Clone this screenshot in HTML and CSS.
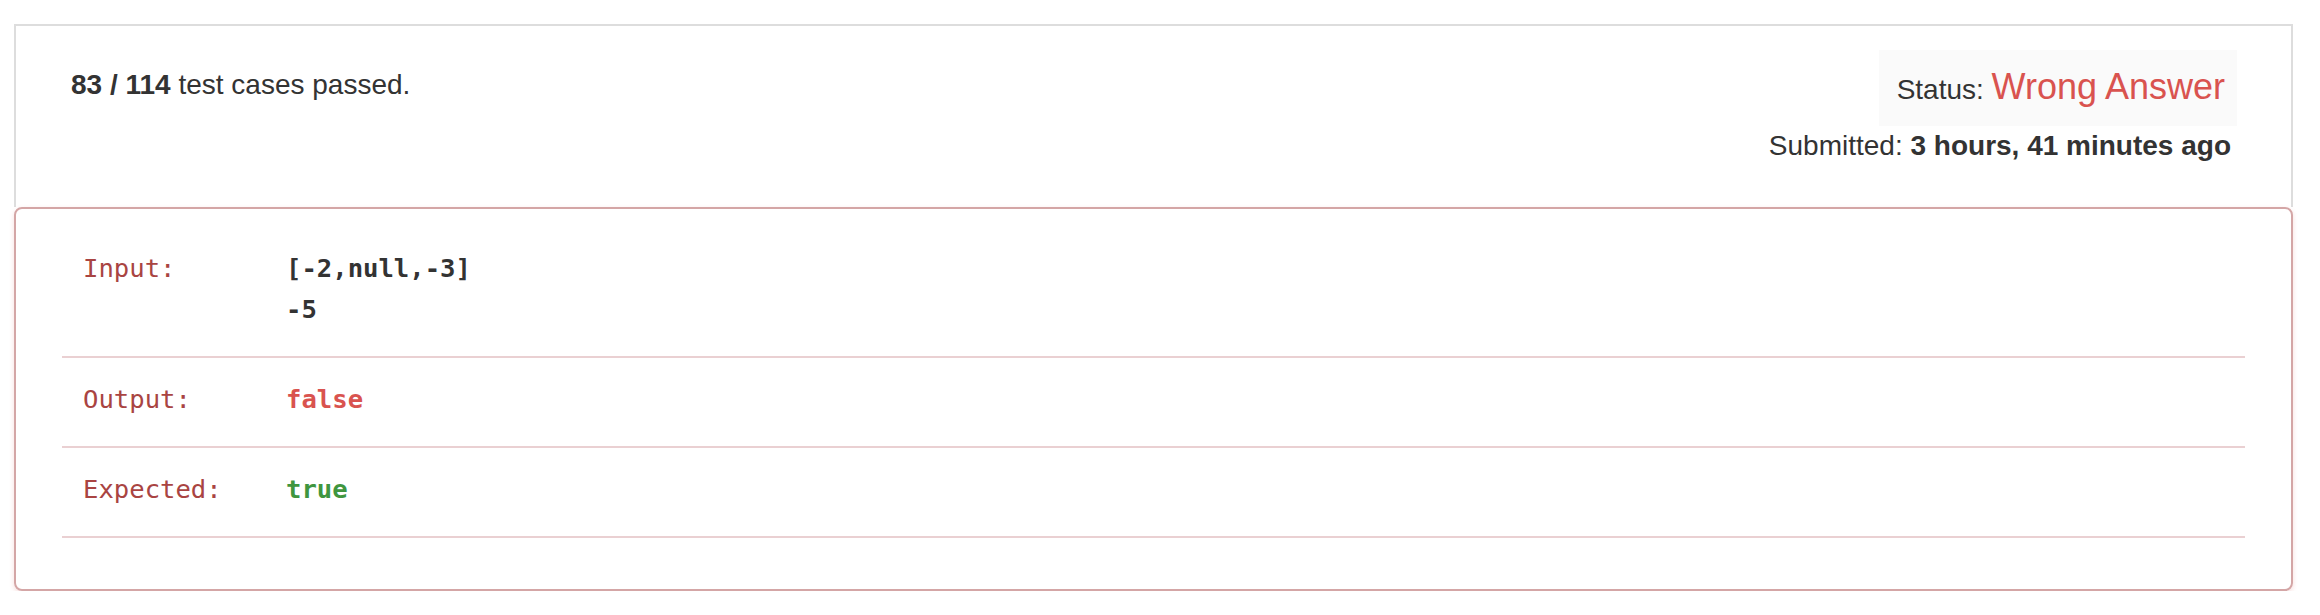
FILE: index.html
```html
<!DOCTYPE html>
<html lang="en">
<head>
<meta charset="utf-8">
<title>Submission Detail</title>
<link rel="stylesheet" href="styles.css">
</head>
<body>
  <div class="page">
    <section class="summary">
      <div class="passed"><strong>83 / 114</strong> test cases passed.</div>
      <div class="meta">
        <div class="status">Status: <span class="verdict">Wrong Answer</span></div>
        <div class="submitted">Submitted: <strong>3 hours, 41 minutes ago</strong></div>
      </div>
    </section>
    <section class="result">
      <div class="row">
        <div class="label">Input:</div>
        <div class="value">[-2,null,-3]<br>-5</div>
      </div>
      <div class="row">
        <div class="label">Output:</div>
        <div class="value wrong">false</div>
      </div>
      <div class="row">
        <div class="label">Expected:</div>
        <div class="value right">true</div>
      </div>
    </section>
  </div>
</body>
</html>
```
FILE: styles.css
```css
html, body {
  margin: 0;
  padding: 0;
  background: #ffffff;
}

body {
  font-family: "Liberation Sans", Arial, Helvetica, sans-serif;
  font-size: 28px;
  color: #333333;
}

.page {
  padding: 24px 27px 0 14px;
}

.summary {
  display: flex;
  justify-content: space-between;
  align-items: flex-start;
  border: 2px solid #dddddd;
  border-bottom: 0;
  padding: 24px 54px 41px 55px;
}

.passed {
  margin-top: 15px;
  line-height: 40px;
}

.meta {
  display: flex;
  flex-direction: column;
  align-items: flex-end;
}

.status {
  background: #fafafa;
  padding: 0 12px 0 18px;
  line-height: 73px;
}

.verdict {
  font-size: 36px;
  color: #d9534f;
}

.submitted {
  line-height: 40px;
  padding-right: 6px;
}

.result {
  border: 2px solid #d4a6a6;
  border-radius: 8px;
  box-shadow: 0 2px 5px rgba(217, 83, 79, 0.2);
  padding: 18px 46px 51px;
}

.row {
  display: grid;
  grid-template-columns: 203px 1fr;
  padding: 21px 21px 26px;
  border-bottom: 2px solid #ead0d2;
  font-family: "DejaVu Sans Mono", "Liberation Mono", monospace;
  font-size: 25.6px;
  line-height: 41px;
}

.label {
  color: #a94442;
}

.value {
  font-weight: bold;
  color: #333333;
}

.value.wrong {
  color: #d9534f;
}

.value.right {
  color: #3f963f;
}
```
